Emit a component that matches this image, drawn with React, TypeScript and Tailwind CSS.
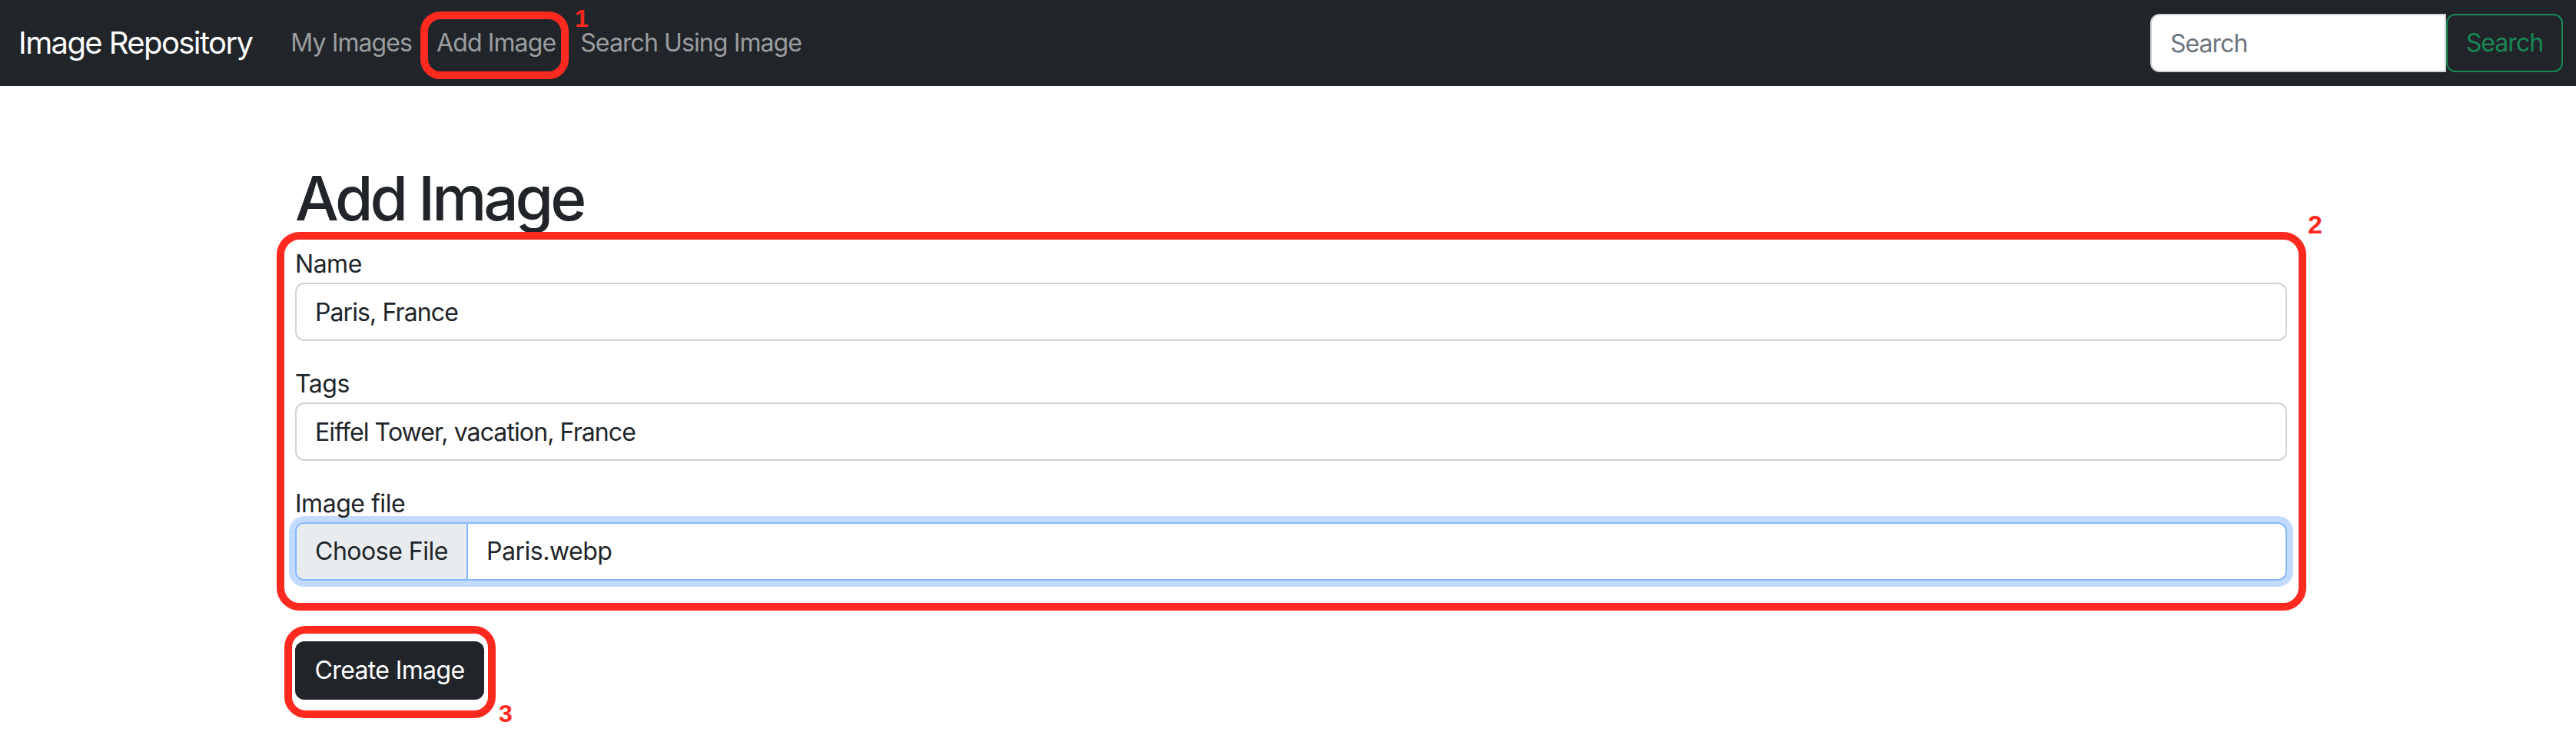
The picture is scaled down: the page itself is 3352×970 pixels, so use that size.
import React from 'react';

const navLinks = ['My Images', 'Add Image', 'Search Using Image'];

const fieldInput =
  'h-[76px] w-full rounded-[12px] border-2 border-[#ced4da] bg-white px-[24px] text-[32px] tracking-[-0.028em] text-[#212529] outline-none';

export default function App() {
  return (
    <div className="relative min-h-[970px] bg-white font-['Inter','Liberation_Sans',sans-serif] text-[#212529]">
      {/* Navbar */}
      <nav className="flex h-[112px] items-center justify-between bg-[#212529] pl-[24px] pr-[17px]">
        <div className="flex items-center">
          <a href="#" className="mr-[34px] py-[10px] text-[40px] leading-[60px] tracking-[-0.04em] text-white">
            Image Repository
          </a>
          <ul className="flex">
            {navLinks.map((link) => (
              <li key={link}>
                <a href="#" className="block px-[16px] py-[16px] text-[32px] leading-[48px] tracking-[-0.028em] text-[#9b9d9f]">
                  {link}
                </a>
              </li>
            ))}
          </ul>
        </div>
        <form className="flex">
          <input
            type="search"
            placeholder="Search"
            className="h-[76px] w-[385px] rounded-l-[12px] border-2 border-[#ced4da] bg-white px-[24px] text-[32px] tracking-[-0.03em] text-[#212529] outline-none placeholder:text-[#6c757d]"
          />
          <button
            type="button"
            className="h-[76px] w-[152px] rounded-[12px] border-2 border-[#198754] text-[32px] tracking-[-0.03em] text-[#198754]"
          >
            Search
          </button>
        </form>
      </nav>

      {/* Main */}
      <main className="ml-[384px] w-[2592px] pt-[98px] tracking-[-0.03em]">
        <h1 className="mb-[14px] text-[80px] font-medium leading-[96px] tracking-[-0.05em]">Add Image</h1>
        <form>
          <div className="mb-[32px]">
            <label className="block text-[32px] leading-[48px]">Name</label>
            <input className={fieldInput} defaultValue="Paris, France" />
          </div>
          <div className="mb-[32px]">
            <label className="block text-[32px] leading-[48px]">Tags</label>
            <input className={fieldInput} defaultValue="Eiffel Tower, vacation, France" />
          </div>
          <div className="mb-[32px]">
            <label className="block text-[32px] leading-[48px]">Image file</label>
            <div className="flex h-[76px] overflow-hidden rounded-[12px] border-2 border-[#86b7fe] bg-white text-[32px] shadow-[0_0_0_8px_rgba(13,110,253,0.25)]">
              <span className="flex items-center whitespace-nowrap border-r-2 border-[#86b7fe] bg-[#e9ecef] px-[24px]">
                Choose File
              </span>
              <span className="flex items-center whitespace-nowrap px-[24px]">Paris.webp</span>
            </div>
          </div>
          <button
            type="button"
            className="mt-[47px] h-[76px] w-[246px] rounded-[12px] bg-[#212529] text-[32px] tracking-[-0.02em] text-white"
          >
            Create Image
          </button>
        </form>
      </main>

      {/* Annotation overlays */}
      <div className="pointer-events-none absolute left-[547px] top-[15px] h-[88px] w-[193px] rounded-[26px] border-[10px] border-[#ff2a1f]" />
      <span className="absolute left-[748px] top-[8px] font-['Liberation_Sans',sans-serif] text-[32px] font-bold leading-none text-[#ff2a1f]">
        1
      </span>
      <div className="pointer-events-none absolute left-[360px] top-[302px] h-[493px] w-[2641px] rounded-[30px] border-[10px] border-[#ff2a1f]" />
      <span className="absolute left-[3003px] top-[275px] font-['Liberation_Sans',sans-serif] text-[34px] font-bold leading-none text-[#ff2a1f]">
        2
      </span>
      <div className="pointer-events-none absolute left-[370px] top-[815px] h-[120px] w-[275px] rounded-[28px] border-[10px] border-[#ff2a1f]" />
      <span className="absolute left-[649px] top-[913px] font-['Liberation_Sans',sans-serif] text-[32px] font-bold leading-none text-[#ff2a1f]">
        3
      </span>
    </div>
  );
}
